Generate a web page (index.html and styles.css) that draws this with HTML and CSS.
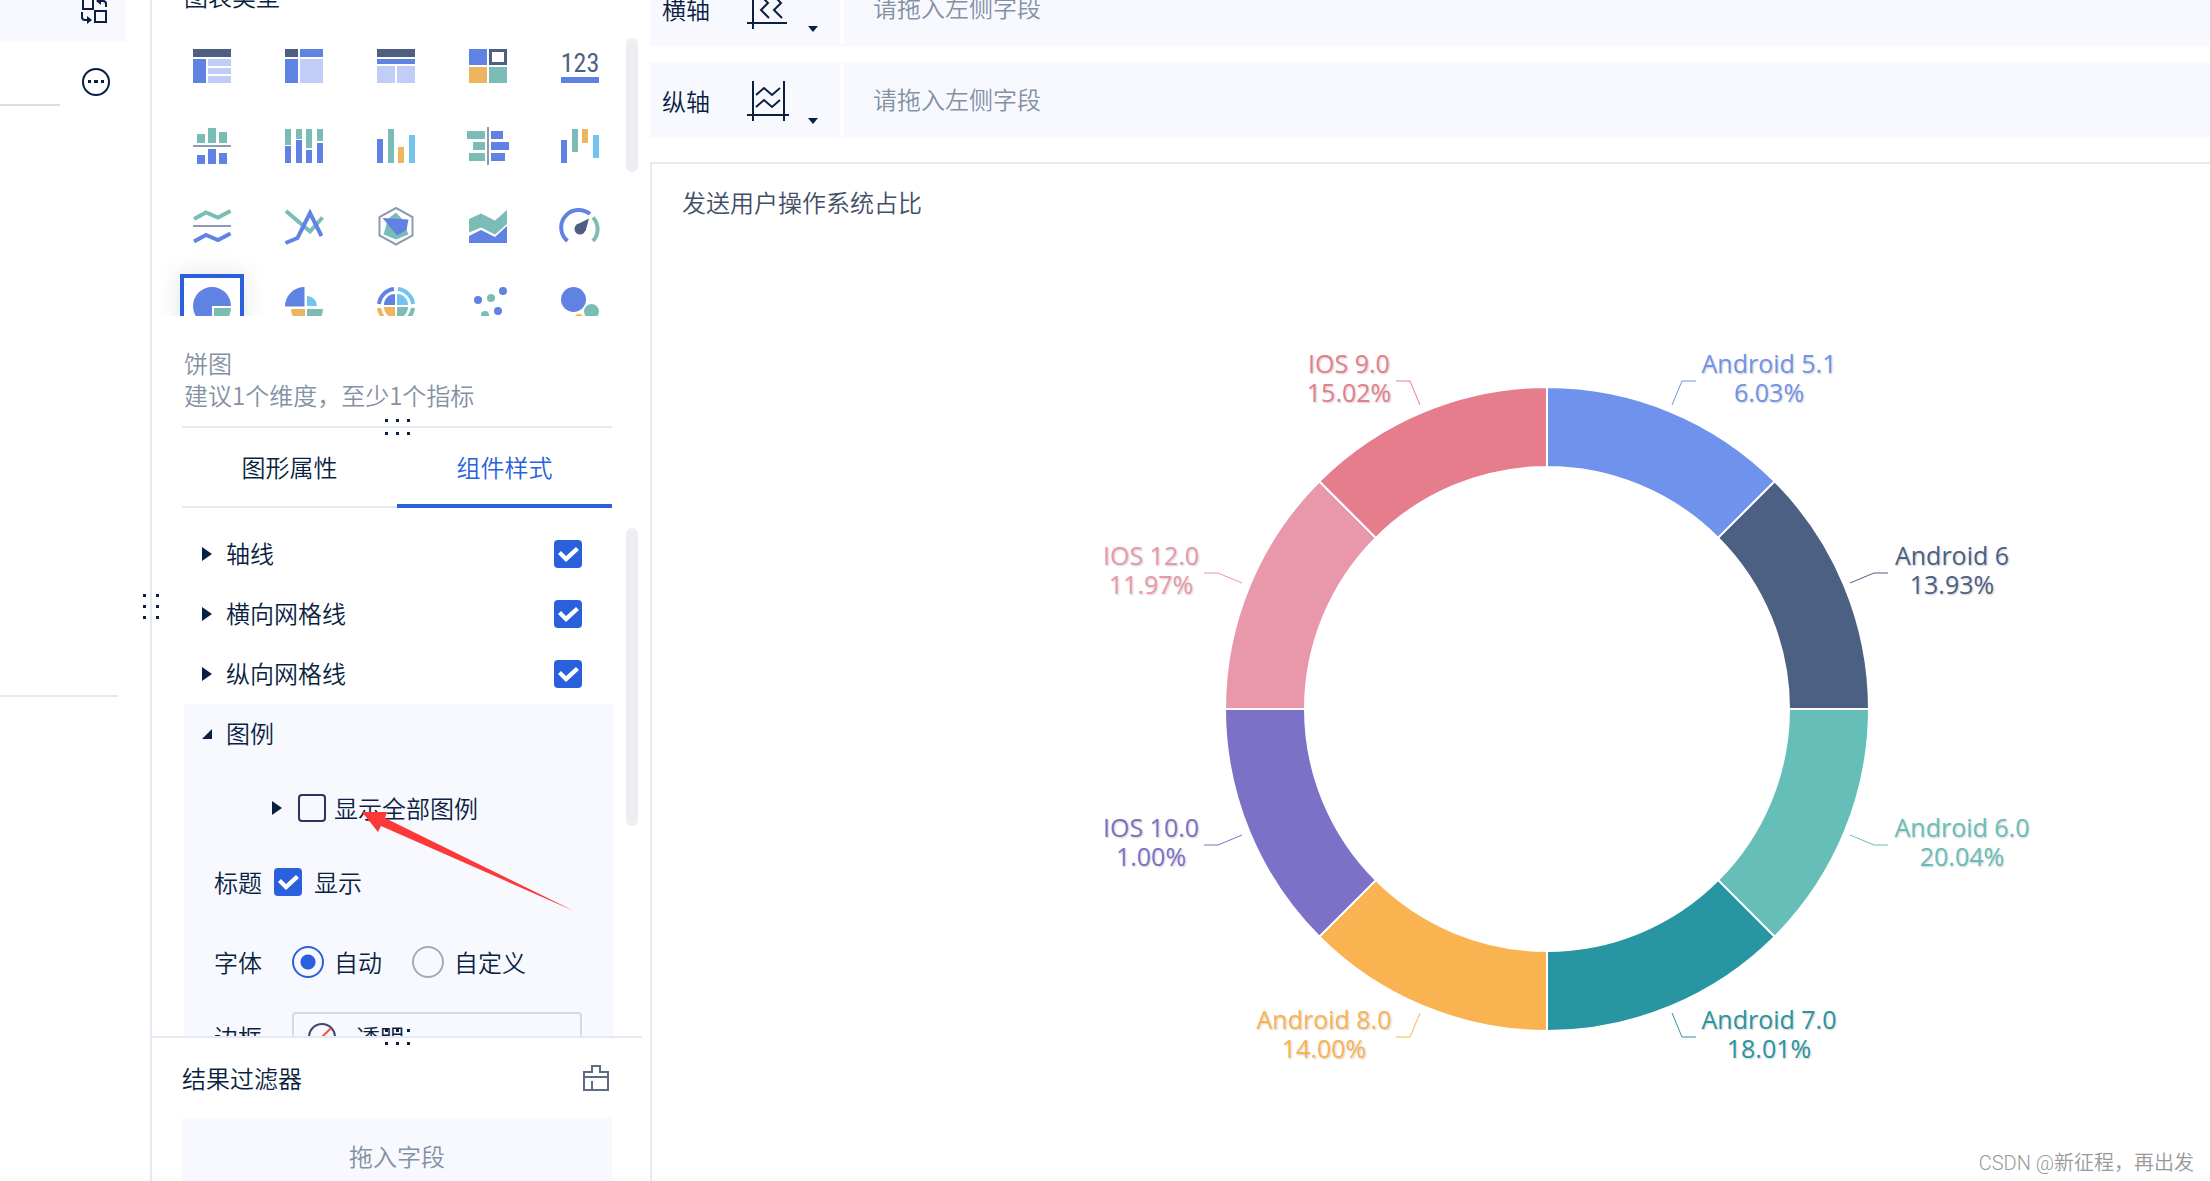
FILE: index.html
```html
<!DOCTYPE html>
<html lang="zh-CN">
<head>
<meta charset="utf-8">
<title>图表组件</title>
<link rel="stylesheet" href="styles.css">
</head>
<body>
<div class="app">
  <aside class="side">
    <div class="side-head">
      <button class="icon-btn" type="button" aria-label="切换">
        <svg width="28" height="28" viewBox="0 0 28 28" fill="none" stroke="#0b1f42" stroke-width="2">
          <path d="M3 2h10v11H3zM15 15h11v11H15zM2 16v5q0 3 3 3h3M26 11V8q0-3-3-3h-3"/>
          <path d="M7 20l5 4-5 4zM21 1l-5 4 5 4z" fill="#0b1f42" stroke="none"/>
        </svg>
      </button>
    </div>
    <div class="side-search">
      <span class="side-line"></span>
      <button class="icon-btn" type="button" aria-label="更多">
        <svg width="28" height="28" viewBox="0 0 28 28"><circle cx="14" cy="14" r="13" fill="none" stroke="#0b1f42" stroke-width="2"/><path d="M6 12h3v3H6zM12 12h4v3h-4zM19 12h3v3h-3z" fill="#0b1f42"/></svg>
      </button>
    </div>
    <div class="side-list"></div>
  </aside>

  <section class="config">
    <span class="grip grip-v"><i></i><i></i><i></i><i></i><i></i><i></i></span>
    <h2 class="config-title">图表类型</h2>
    <div class="types">
      <div class="type-grid">
        <button type="button" class="type" aria-label="分组表"><svg viewBox="0 0 64 64"><path class="n" d="M13 15h38v8H13z"/><path class="b" d="M13 25h13v24H13z"/><path class="l" d="M28 25h23v7H28zM28 34h23v6H28zM28 42h23v7H28z"/></svg></button>
        <button type="button" class="type" aria-label="交叉表"><svg viewBox="0 0 64 64"><path class="n" d="M13 15h13v8H13z"/><path class="b" d="M28 15h23v8H28zM13 25h13v24H13z"/><path class="l" d="M28 25h23v24H28z"/></svg></button>
        <button type="button" class="type" aria-label="明细表"><svg viewBox="0 0 64 64"><path class="n" d="M13 15h38v8H13z"/><path class="b" d="M13 25h38v5H13z"/><path class="l" d="M13 32h18v17H13zM33 32h18v17H33z"/></svg></button>
        <button type="button" class="type" aria-label="颜色表格"><svg viewBox="0 0 64 64"><path class="b" d="M13 15h18v16H13z"/><path class="n" fill-rule="evenodd" d="M33 15h18v16H33zM36 18v10h12V18z"/><path class="o" d="M13 33h18v16H13z"/><path class="t" d="M33 33h18v16H33z"/></svg></button>
        <button type="button" class="type" aria-label="指标卡"><svg viewBox="0 0 64 64"><text class="digits n" x="32" y="38" text-anchor="middle">123</text><path class="b" d="M13 43h38v6H13z"/></svg></button>

        <button type="button" class="type" aria-label="对比柱形图"><svg viewBox="0 0 64 64"><path class="t" d="M17 20h8v9h-8zM28 14h8v15h-8zM39 18h8v11h-8z"/><path class="g" d="M13 31h38v2H13z"/><path class="b" d="M17 41h8v9h-8zM28 35h8v15h-8zM39 39h8v11h-8z"/></svg></button>
        <button type="button" class="type" aria-label="堆积柱形图"><svg viewBox="0 0 64 64"><path class="t" d="M13 15h6v16h-6zM24 15h6v10h-6zM34 15h6v19h-6zM45 15h6v12h-6z"/><path class="b" d="M13 32h6v17h-6zM24 26h6v23h-6zM34 36h6v13h-6zM45 29h6v20h-6z"/></svg></button>
        <button type="button" class="type" aria-label="分组柱形图"><svg viewBox="0 0 64 64"><path class="b" d="M13 25h6v24h-6z"/><path class="t" d="M24 15h6v34h-6z"/><path class="o" d="M34 33h6v16h-6z"/><path class="s" d="M45 21h6v28h-6z"/></svg></button>
        <button type="button" class="type" aria-label="对比条形图"><svg viewBox="0 0 64 64"><path class="t" d="M11 17h18v8H11zM17 28h12v8H17zM13 39h16v8H13z"/><path class="g" d="M31 13h2v38h-2z"/><path class="b" d="M35 17h12v8H35zM35 28h18v8H35zM35 39h14v8H35z"/></svg></button>
        <button type="button" class="type" aria-label="瀑布图"><svg viewBox="0 0 64 64"><path class="b" d="M13 26h6v23h-6z"/><path class="t" d="M24 15h6v23h-6z"/><path class="o" d="M34 15h6v14h-6z"/><path class="s" d="M45 21h6v23h-6z"/></svg></button>

        <button type="button" class="type" aria-label="对比折线图"><svg viewBox="0 0 64 64"><path class="ts" d="M14 25L26 18.500 38 23.500 50.500 17"/><path class="g" d="M13 31h38v2H13z"/><path class="bs" d="M14 47.500L26 41 38 46 50.500 39.500"/></svg></button>
        <button type="button" class="type" aria-label="折线图"><svg viewBox="0 0 64 64"><path class="ts" d="M14 17L38 37.500 50.500 23.500"/><path class="bs" d="M13.500 49L25.500 44 38 19 49.500 42"/></svg></button>
        <button type="button" class="type" aria-label="雷达图"><svg viewBox="0 0 64 64"><path d="M32 14L48.500 23V41.500L32 50.500 15.500 41.500V23z" fill="none" stroke="#8f9ab3" stroke-width="2"/><path class="t" d="M32 18.500L38 25 44.500 40.500 32 45.500 19.500 40.500 24 25z"/><path class="b" d="M18.500 24L44.500 25.500 42.500 36 33 41.500z"/></svg></button>
        <button type="button" class="type" aria-label="面积图"><svg viewBox="0 0 64 64"><path class="t" d="M13 25L25 19.500 39 26.500 51 16V30L39 40.500 25 33.500 13 38.500z"/><path class="b" d="M13 42L25 36 39 43 51 32V49H13z"/></svg></button>
        <button type="button" class="type" aria-label="仪表盘"><svg viewBox="0 0 64 64"><path class="bs" d="M19.500 47A17.300 17.300 0 0 1 42 20"/><path class="ts" d="M45 23.500A17.300 17.300 0 0 1 45 47"/><circle class="n" cx="32" cy="35" r="5.500"/><path class="n" d="M41 24.500L37.500 37 28 31z"/></svg></button>

        <button type="button" class="type is-active" aria-label="饼图" aria-pressed="true"><svg viewBox="0 0 64 64"><path class="b" d="M32 32V51A19 19 0 1 1 51 32z"/><path class="t" d="M34 34h17a17 17 0 0 1-17 17z"/></svg></button>
        <button type="button" class="type" aria-label="玫瑰图"><svg viewBox="0 0 64 64"><path class="b" d="M32.500 32.500V13A19.500 19.500 0 0 0 13 32.500z"/><path class="s" d="M35 32V22a10 10 0 0 1 10 10z"/><path class="o" d="M33 35v14a14 14 0 0 1-14-14z"/><path class="t" d="M35 35h16a16 16 0 0 1-16 16z"/></svg></button>
        <button type="button" class="type" aria-label="多层饼图"><svg viewBox="0 0 64 64"><path class="bs" d="M15 30A17 17 0 0 1 30 15"/><path class="ss" d="M34 15A17 17 0 0 1 49 30"/><path class="ts" d="M49 34A17 17 0 0 1 34 49"/><path class="os" d="M30 49A17 17 0 0 1 15 34"/><path class="b" d="M31 31V20A11 11 0 0 0 20 31z"/><path class="s" d="M33 31V20a11 11 0 0 1 11 11z"/><path class="t" d="M33 33h11a11 11 0 0 1-11 11z"/><path class="o" d="M31 33v11a11 11 0 0 1-11-11z"/></svg></button>
        <button type="button" class="type" aria-label="散点图"><svg viewBox="0 0 64 64"><g class="b"><circle cx="22" cy="26" r="4"/><circle cx="47" cy="17" r="4"/><circle cx="42" cy="37" r="4"/></g><g class="t"><circle cx="35" cy="24" r="4"/><circle cx="29" cy="41" r="4"/></g></svg></button>
        <button type="button" class="type" aria-label="聚合气泡图"><svg viewBox="0 0 64 64"><circle class="b" cx="25.500" cy="25.500" r="12.500"/><circle class="t" cx="43.500" cy="37.500" r="7.500"/><circle class="o" cx="31" cy="45" r="5"/></svg></button>
      </div>
      <span class="thumb thumb-types"></span>
    </div>
    <p class="hint">饼图<br>建议1个维度，至少1个指标</p>
    <div class="split"><span class="grip"><i></i><i></i><i></i><i></i><i></i><i></i></span></div>
    <div class="tabs">
      <button type="button" class="tab">图形属性</button>
      <button type="button" class="tab is-active">组件样式</button>
    </div>
    <div class="styles-pane">
      <div class="styles-list">
        <div class="item"><span class="caret"></span><label for="axis">轴线</label><input type="checkbox" id="axis" checked></div>
        <div class="item"><span class="caret"></span><label for="hgrid">横向网格线</label><input type="checkbox" id="hgrid" checked></div>
        <div class="item"><span class="caret"></span><label for="vgrid">纵向网格线</label><input type="checkbox" id="vgrid" checked></div>
        <div class="legend">
          <div class="item"><span class="caret is-open"></span><span>图例</span></div>
          <div class="row row-all"><span class="caret"></span><input type="checkbox" id="all"><label for="all">显示全部图例</label></div>
          <div class="row row-title"><span>标题</span><input type="checkbox" id="show" checked><label for="show">显示</label></div>
          <div class="row row-font"><span class="name">字体</span>
            <label class="choice"><input type="radio" name="font" checked>自动</label>
            <label class="choice"><input type="radio" name="font">自定义</label>
          </div>
          <div class="row"><label class="name" for="border">边框</label>
            <div class="select-wrap">
              <svg width="28" height="28" viewBox="0 0 28 28" fill="none" stroke-width="2"><circle cx="14" cy="14" r="13" stroke="#3b4a68"/><path d="M5 23L23 5" stroke="#fb4a4a"/></svg>
              <select id="border"><option>透明</option></select>
            </div>
          </div>
          <svg class="arrow" width="214" height="102" viewBox="0 0 214 102"><path d="M1 2h25l-2 6 189 93L20 16l-3 6z" fill="#fc3938"/></svg>
        </div>
      </div>
      <span class="thumb thumb-styles"></span>
    </div>
    <div class="filter">
      <span class="grip"><i></i><i></i><i></i><i></i><i></i><i></i></span>
      <div class="filter-head">
        <h2>结果过滤器</h2>
        <button class="icon-btn" type="button" aria-label="清空">
          <svg width="28" height="28" viewBox="0 0 28 28" fill="none" stroke="#5d6b85" stroke-width="2"><path d="M2 8h8V2h8v6h8v18H2zM2 13h24M10 17v9"/></svg>
        </button>
      </div>
      <div class="drop">拖入字段</div>
    </div>
  </section>

  <main class="main">
    <div class="axis">
      <div class="axis-name"><span>横轴</span>
        <button class="axis-btn" type="button" aria-label="横轴设置">
          <svg width="42" height="42" viewBox="0 0 42 42" fill="none" stroke="#0b1f42" stroke-width="2"><path d="M6 0v41M0 35h40M21 2l-7 6 7 7-7 7 8 8M34 2l-7 6 7 7-7 7 8 8"/></svg>
          <span class="down"></span>
        </button>
      </div>
      <div class="axis-drop">请拖入左侧字段</div>
    </div>
    <div class="axis">
      <div class="axis-name"><span>纵轴</span>
        <button class="axis-btn" type="button" aria-label="纵轴设置">
          <svg width="42" height="42" viewBox="0 0 42 42" fill="none" stroke="#0b1f42" stroke-width="2"><path d="M6 1v40M37 1v40M0 35h42M9 15l8-7 8 7 8-7M9 27l8-7 8 7 8-7"/></svg>
          <span class="down"></span>
        </button>
      </div>
      <div class="axis-drop">请拖入左侧字段</div>
    </div>
    <div class="card">
      <h1>发送用户操作系统占比</h1>
      <div class="chart">
        <svg width="1000" height="760" viewBox="-500 -380 1000 760" role="img" aria-label="发送用户操作系统占比">
          <g stroke="#fff" stroke-width="2">
            <path fill="#6f93ec" d="M0-322A322 322 0 0 1 227.700-227.700L171.100-171.100A242 242 0 0 0 0-242z"/>
            <path fill="#4c6084" d="M227.700-227.700A322 322 0 0 1 322 0H242A242 242 0 0 0 171.100-171.100z"/>
            <path fill="#66beb9" d="M322 0A322 322 0 0 1 227.700 227.700L171.100 171.100A242 242 0 0 0 242 0z"/>
            <path fill="#2795a2" d="M227.700 227.700A322 322 0 0 1 0 322V242A242 242 0 0 0 171.100 171.100z"/>
            <path fill="#f9b350" d="M0 322A322 322 0 0 1-227.700 227.700L-171.100 171.100A242 242 0 0 0 0 242z"/>
            <path fill="#7b72c7" d="M-227.700 227.700A322 322 0 0 1-322 0H-242A242 242 0 0 0-171.100 171.100z"/>
            <path fill="#e898aa" d="M-322 0A322 322 0 0 1-227.700-227.700L-171.100-171.100A242 242 0 0 0-242 0z"/>
            <path fill="#e67d8c" d="M-227.700-227.700A322 322 0 0 1 0-322V-242A242 242 0 0 0-171.100-171.100z"/>
          </g>
          <g fill="none" stroke-width="1">
            <path stroke="#6f93ec" d="M149-328h-14l-10 24"/>
            <path stroke="#4c6084" d="M341-136h-14l-24 10"/>
            <path stroke="#66beb9" d="M341 136h-14l-24-10"/>
            <path stroke="#2795a2" d="M149 328h-14l-10-24"/>
            <path stroke="#f9b350" d="M-151 328h14l10-24"/>
            <path stroke="#7b72c7" d="M-343 136h14l24-10"/>
            <path stroke="#e898aa" d="M-343-136h14l24 10"/>
            <path stroke="#e67d8c" d="M-151-328h14l10 24"/>
          </g>
          <g class="labels">
            <g fill="#6f93ec"><text x="222" y="-336">Android 5.1</text><text x="222" y="-307">6.03%</text></g>
            <g fill="#4c6084"><text x="405" y="-144">Android 6</text><text x="405" y="-115">13.93%</text></g>
            <g fill="#66beb9"><text x="415" y="128">Android 6.0</text><text x="415" y="157">20.04%</text></g>
            <g fill="#2795a2"><text x="222" y="320">Android 7.0</text><text x="222" y="349">18.01%</text></g>
            <g fill="#f9b350"><text x="-223" y="320">Android 8.0</text><text x="-223" y="349">14.00%</text></g>
            <g fill="#7b72c7"><text x="-396" y="128">IOS 10.0</text><text x="-396" y="157">1.00%</text></g>
            <g fill="#e898aa"><text x="-396" y="-144">IOS 12.0</text><text x="-396" y="-115">11.97%</text></g>
            <g fill="#e67d8c"><text x="-198" y="-336">IOS 9.0</text><text x="-198" y="-307">15.02%</text></g>
          </g>
        </svg>
      </div>
    </div>
  </main>
  <p class="watermark">CSDN @新征程，再出发</p>
</div>
</body>
</html>
```

FILE: styles.css
```css
* { box-sizing: border-box; }

body {
  margin: 0;
  overflow: hidden;
  background: #fff;
  color: #0b1f42;
  font: 350 24px/32px "Noto Sans CJK SC", sans-serif;
}

h1, h2, p { margin: 0; font-size: 24px; font-weight: 350; }

button {
  padding: 0;
  border: 0;
  background: none;
  color: inherit;
  font: inherit;
}

svg { display: block; }

.app {
  position: relative;
  display: flex;
  height: 100vh;
  overflow: hidden;
}

/* left strip */
.side { flex: 0 0 150px; }

.side-head {
  display: flex;
  align-items: center;
  justify-content: flex-end;
  width: 126px;
  height: 64px;
  margin-top: -22px;
  padding-right: 18px;
  background: #f7f9fe;
}

.side-search {
  display: flex;
  align-items: flex-start;
  gap: 22px;
  height: 64px;
  padding-top: 26px;
}

.side-line {
  align-self: stretch;
  width: 60px;
  border-bottom: 2px solid #d9dfe3;
}

.side-list {
  width: 118px;
  height: 50vh;
  border-bottom: 2px solid #e6e9f1;
}

/* configuration column */
.config {
  position: relative;
  display: flex;
  flex: 0 0 500px;
  flex-direction: column;
  border-left: 2px solid #e6e9f1;
}

.config-title {
  margin: -20px 0 22px 32px;
}

.types {
  position: relative;
  flex: none;
  height: 282px;
  padding-left: 28px;
  overflow: hidden;
}

.type-grid {
  display: grid;
  grid-template-columns: repeat(5, 64px);
  gap: 16px 28px;
}

.type { height: 64px; }
.type svg { width: 64px; height: 64px; }

.type.is-active {
  outline: 4px solid #2b60dc;
  outline-offset: -4px;
  box-shadow: 0 0 24px rgba(11, 31, 66, .12);
}

.n { fill: #4e5f82; }
.b { fill: #6082e3; }
.l { fill: #c0cdf6; }
.t { fill: #7bbdb6; }
.o { fill: #eeb55f; }
.s { fill: #72c3f0; }
.g { fill: #8f9ab3; }
.bs, .ts, .ss, .os { fill: none; stroke-width: 4; }
.bs { stroke: #6082e3; }
.ts { stroke: #7bbdb6; }
.ss { stroke: #72c3f0; }
.os { stroke: #eeb55f; }

.digits {
  font: 400 26px "Roboto Condensed", Roboto, sans-serif;
}

.thumb {
  position: absolute;
  right: 12px;
  width: 12px;
  border-radius: 6px;
  background: #edeef2;
}

.thumb-types { top: 4px; height: 134px; }
.thumb-styles { top: 20px; height: 298px; }

.hint {
  margin: 31px 32px 15px;
  color: #8490a3;
}

.split {
  position: relative;
  flex: none;
  height: 2px;
  margin: 0 38px 0 30px;
  background: #e6e9f1;
}

.grip {
  position: absolute;
  z-index: 2;
  top: -7px;
  left: 203px;
  display: grid;
  grid-template-columns: repeat(3, 3px);
  gap: 10px 8px;
}

.grip i {
  width: 3px;
  height: 3px;
  background: #0b1f42;
}

.grip-v {
  top: 594px;
  left: -9px;
  grid-template-columns: repeat(2, 3px);
  gap: 8px 10px;
}

.tabs {
  display: flex;
  flex: none;
  height: 80px;
  margin: 0 38px 0 30px;
  box-shadow: inset 0 -2px #e6e9f1;
}

.tab { flex: 1; padding-bottom: 2px; }
.tab.is-active { color: #2b60dc; box-shadow: inset 0 -4px #2b60dc; }

.styles-pane {
  position: relative;
  flex: 1;
  min-height: 0;
}

.styles-list {
  height: 100%;
  padding: 16px 36px 0 32px;
  overflow: hidden;
}

.item {
  display: flex;
  align-items: center;
  gap: 14px;
  height: 60px;
  padding: 0 32px 0 18px;
}

.item input { margin-left: auto; }

.item label, .item span:last-child { padding-bottom: 2px; }

.caret {
  width: 10px;
  height: 14px;
  background: #0b1f42;
  clip-path: polygon(0 0, 100% 50%, 0 100%);
}

.caret.is-open {
  height: 10px;
  clip-path: polygon(100% 0, 100% 100%, 0 100%);
}

input { flex: none; margin: 0; appearance: none; }

input[type="checkbox"] {
  width: 28px;
  height: 28px;
  border: 2px solid #263654;
  border-radius: 4px;
}

input[type="checkbox"]:checked { border: 0; background: #2b60dc; }

input[type="checkbox"]:checked::before {
  content: "";
  display: block;
  width: 28px;
  height: 28px;
  background: #fff;
  clip-path: polygon(4px 14px, 7px 11px, 12px 16px, 22px 7px, 25px 10px, 12px 22px);
}

input[type="radio"] {
  width: 32px;
  height: 32px;
  border: 2px solid #a2abbc;
  border-radius: 50%;
}

input[type="radio"]:checked {
  border-color: #2b60dc;
  background: radial-gradient(circle, #2b60dc 7px, transparent 8px);
}

.legend {
  position: relative;
  background: #f7f9fe;
}

.row {
  display: flex;
  align-items: center;
  height: 50px;
  padding: 0 32px 0 30px;
}

.row-all { gap: 8px; height: 88px; padding-left: 88px; }
.row-all .caret { margin-right: 8px; }
.row-title { gap: 12px; height: 60px; }
.row-font { height: 100px; }
.name { width: 78px; }
.choice { display: flex; align-items: center; gap: 10px; margin-right: 30px; }

.select-wrap {
  display: flex;
  flex: 1;
  align-items: center;
  gap: 20px;
  height: 50px;
  padding: 0 14px;
  border: 2px solid #d4dae1;
  border-radius: 4px;
}

.select-wrap select {
  flex: 1;
  padding: 0;
  border: 0;
  appearance: none;
  background: none;
  color: inherit;
  font: inherit;
}

.arrow { position: absolute; top: 106px; left: 177px; }

.filter {
  position: relative;
  flex: 0 0 145px;
  min-height: 0;
  margin-right: 8px;
  border-top: 2px solid #e6e9f1;
}

.filter .grip { top: -9px; left: 233px; }

.filter-head {
  display: flex;
  align-items: center;
  justify-content: space-between;
  height: 80px;
  padding: 0 32px 0 30px;
}

.drop {
  height: 80px;
  margin: 0 30px;
  background: #f7f9fe;
  color: #8490a3;
  line-height: 76px;
  text-align: center;
}

/* axis shelves and chart */
.main {
  display: flex;
  flex: 1;
  flex-direction: column;
  min-width: 0;
  margin-top: -30px;
}

.axis {
  display: flex;
  flex: none;
  height: 76px;
  margin-bottom: 16px;
  background: #f7f9fe;
}

.axis-name {
  display: flex;
  align-items: center;
  gap: 37px;
  width: 190px;
  padding: 2px 0 0 12px;
}

.axis-btn {
  display: flex;
  align-items: flex-end;
  gap: 19px;
}

.down {
  width: 10px;
  height: 6px;
  margin-bottom: -2px;
  background: #0b1f42;
  clip-path: polygon(0 0, 100% 0, 50% 100%);
}

.axis-drop {
  flex: 1;
  margin: 2px 0;
  padding-left: 29px;
  border-left: 4px solid #fff;
  color: #8490a3;
  line-height: 70px;
}

.card {
  flex: 1;
  margin-top: 8px;
  border: solid #e6e9f1;
  border-width: 2px 0 0 2px;
}

.card h1 {
  padding: 22px 30px 26px;
  color: #434e67;
}

.chart {
  display: flex;
  justify-content: center;
  padding: 85px 0 0 232px;
}

.labels {
  font: 400 25px "Open Sans", "Noto Sans", sans-serif;
  text-anchor: middle;
  text-shadow: 1px 1px 2px rgba(0, 0, 0, .2);
}

.watermark {
  position: absolute;
  right: 16px;
  bottom: 2px;
  color: #999;
  font: 350 20px/32px Roboto, "Noto Sans CJK TC", sans-serif;
}
```
